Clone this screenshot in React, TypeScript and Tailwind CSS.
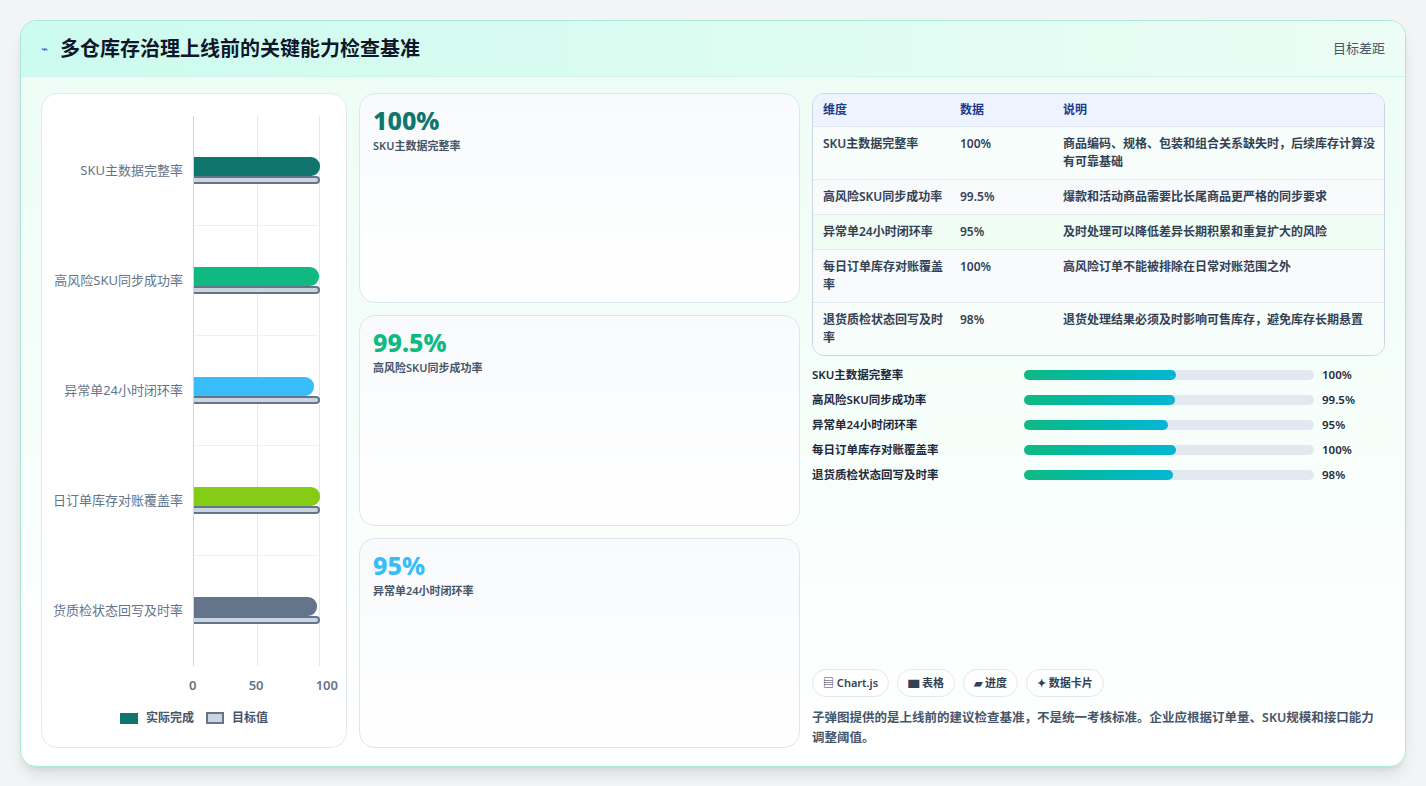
import React from 'react';

const rows = [
  { name: 'SKU主数据完整率', label: 'SKU主数据完整率', v: 100, color: 'bg-[#0f766e]', desc: '商品编码、规格、包装和组合关系缺失时，后续库存计算没有可靠基础' },
  { name: '高风险SKU同步成功率', label: '高风险SKU同步成功率', v: 99.5, color: 'bg-[#10b981]', desc: '爆款和活动商品需要比长尾商品更严格的同步要求' },
  { name: '异常单24小时闭环率', label: '异常单24小时闭环率', v: 95, color: 'bg-[#38bdf8]', desc: '及时处理可以降低差异长期积累和重复扩大的风险' },
  { name: '每日订单库存对账覆盖率', label: '日订单库存对账覆盖率', v: 100, color: 'bg-[#84cc16]', desc: '高风险订单不能被排除在日常对账范围之外' },
  { name: '退货质检状态回写及时率', label: '货质检状态回写及时率', v: 98, color: 'bg-[#64748b]', desc: '退货处理结果必须及时影响可售库存，避免库存长期悬置' },
];

const font = { fontFamily: '"Noto Sans", "Noto Sans CJK SC", sans-serif' };

export default function App() {
  return (
    <div className="w-[1426px] h-[786px] bg-[#f3f4f6] p-5 pt-5" style={font}>
      <div className="h-[747px] rounded-2xl border border-[#a7e8d8] bg-gradient-to-b from-[#ecfdf5] to-white shadow-lg overflow-hidden flex flex-col">
        {/* Header */}
        <div className="h-[56px] shrink-0 flex items-center justify-between px-5 bg-gradient-to-r from-[#ccfbef] to-[#ecfdf5] border-b border-[#d1f5ea]">
          <div className="flex items-center gap-[12px]">
            <span className="text-[#2563eb] text-xs">⌁</span>
            <h1 className="text-[20px] font-bold text-[#0f172a]">多仓库存治理上线前的关键能力检查基准</h1>
          </div>
          <span className="text-[13px] text-[#475569]">目标差距</span>
        </div>

        <div className="flex-1 flex gap-3 px-5 pt-4 pb-[18px]">
          {/* Chart */}
          <div className="w-[306px] shrink-0 bg-white rounded-2xl border border-[#e2e8f0] flex flex-col pt-[22px] pb-5">
            <div className="flex flex-1">
              <div className="w-[151px] flex flex-col">
                {rows.map((r) => (
                  <div key={r.name} className="flex-1 flex items-center justify-end pr-[10px] text-[13px] text-[#64748b]">{r.label}</div>
                ))}
              </div>
              <div className="relative w-[127px] border-l border-[#cbd5e1] flex flex-col">
                <div className="absolute top-0 bottom-0 left-[63px] w-px bg-[#e5e7eb]" />
                <div className="absolute top-0 bottom-0 right-0 w-px bg-[#e5e7eb]" />
                {rows.map((r, i) => (
                  <div key={r.name} className={`relative flex-1 flex flex-col justify-center ${i < 4 ? 'border-b border-[#eef0f3]' : ''}`}>
                    <div className={`h-[19px] rounded-r-[9px] ${r.color}`} style={{ width: `${r.v}%` }} />
                    <div className="h-[8px] w-full rounded-r-[4px] bg-[#cbd5e1] border-2 border-l-0 border-[#64748b]" />
                  </div>
                ))}
              </div>
            </div>
            <div className="flex pl-[147px] w-[296px] justify-between mt-[10px] text-[13px] font-semibold text-[#64748b]">
              <span>0</span><span>50</span><span>100</span>
            </div>
            <div className="flex justify-center items-center gap-2 mt-[14px] text-[12px] font-semibold text-[#475569]">
              <span className="w-[18px] h-[11px] bg-[#0f766e]" />实际完成
              <span className="w-[18px] h-[12px] bg-[#cbd5e1] border-2 border-[#64748b] ml-1" />目标值
            </div>
          </div>

          {/* Metric cards */}
          <div className="w-[441px] shrink-0 flex flex-col gap-3">
            {[
              { v: '100%', c: 'text-[#0f766e]', t: 'SKU主数据完整率' },
              { v: '99.5%', c: 'text-[#10b981]', t: '高风险SKU同步成功率' },
              { v: '95%', c: 'text-[#38bdf8]', t: '异常单24小时闭环率' },
            ].map((m) => (
              <div key={m.t} className="flex-1 rounded-2xl border border-[#dbe7f0] bg-gradient-to-b from-[#f8fafc] to-white px-[13px] pt-[10px]">
                <div className={`text-[25px] leading-[32px] font-extrabold ${m.c}`}>{m.v}</div>
                <div className="text-[11px] mt-[2px] font-semibold text-[#475569]">{m.t}</div>
              </div>
            ))}
          </div>

          {/* Right column */}
          <div className="flex-1 flex flex-col">
            <div className="rounded-xl border border-[#cbd5e1] overflow-hidden bg-white">
              <table className="w-full text-[12px] text-[#334155] font-semibold">
                <thead>
                  <tr className="bg-[#eef4ff] text-[#1e3a8a] text-left">
                    <th className="h-[32px] pl-[10px] w-[147px] font-semibold">维度</th>
                    <th className="w-[103px] font-semibold">数据</th>
                    <th className="font-semibold">说明</th>
                  </tr>
                </thead>
                <tbody>
                  {rows.map((r, i) => (
                    <tr key={r.name} className={`border-t border-[#e2e8f0] align-top ${i % 2 === 1 ? 'bg-[#f8fafc]' : i === 2 ? 'bg-[#f0fdf4]' : 'bg-[#f7fdfa]'}`}>
                      <td className="pl-[10px] pr-2 py-[8px] leading-[18px]">{r.name}</td>
                      <td className="py-[8px] leading-[18px]">{r.v}%</td>
                      <td className="py-[8px] pr-2 leading-[18px]">{r.desc}</td>
                    </tr>
                  ))}
                </tbody>
              </table>
            </div>

            <div className="flex flex-col gap-[7px] mt-[10px]">
              {rows.map((r) => (
                <div key={r.name} className="flex items-center h-[18px] text-[11.5px] font-semibold text-[#1e293b]">
                  <span className="w-[212px]">{r.name}</span>
                  <div className="w-[290px] h-[10px] rounded-full bg-[#e2e8f0]">
                    <div className="h-full rounded-full bg-gradient-to-r from-[#10b981] to-[#06b6d4]" style={{ width: `${r.v * 0.524}%` }} />
                  </div>
                  <span className="ml-[8px]">{r.v}%</span>
                </div>
              ))}
            </div>

            <div className="flex-1" />
            <div className="flex gap-2 text-[11px] font-semibold text-[#334155]">
              {['▤ Chart.js', '▆ 表格', '▰ 进度', '✦ 数据卡片'].map((t) => (
                <span key={t} className="px-[10px] h-[28px] flex items-center rounded-full border border-[#e2e8f0] bg-white">{t}</span>
              ))}
            </div>
            <p className="mt-[11px] text-[12.5px] leading-[20px] font-semibold text-[#475569]">子弹图提供的是上线前的建议检查基准，不是统一考核标准。企业应根据订单量、SKU规模和接口能力调整阈值。</p>
          </div>
        </div>
      </div>
    </div>
  );
}
